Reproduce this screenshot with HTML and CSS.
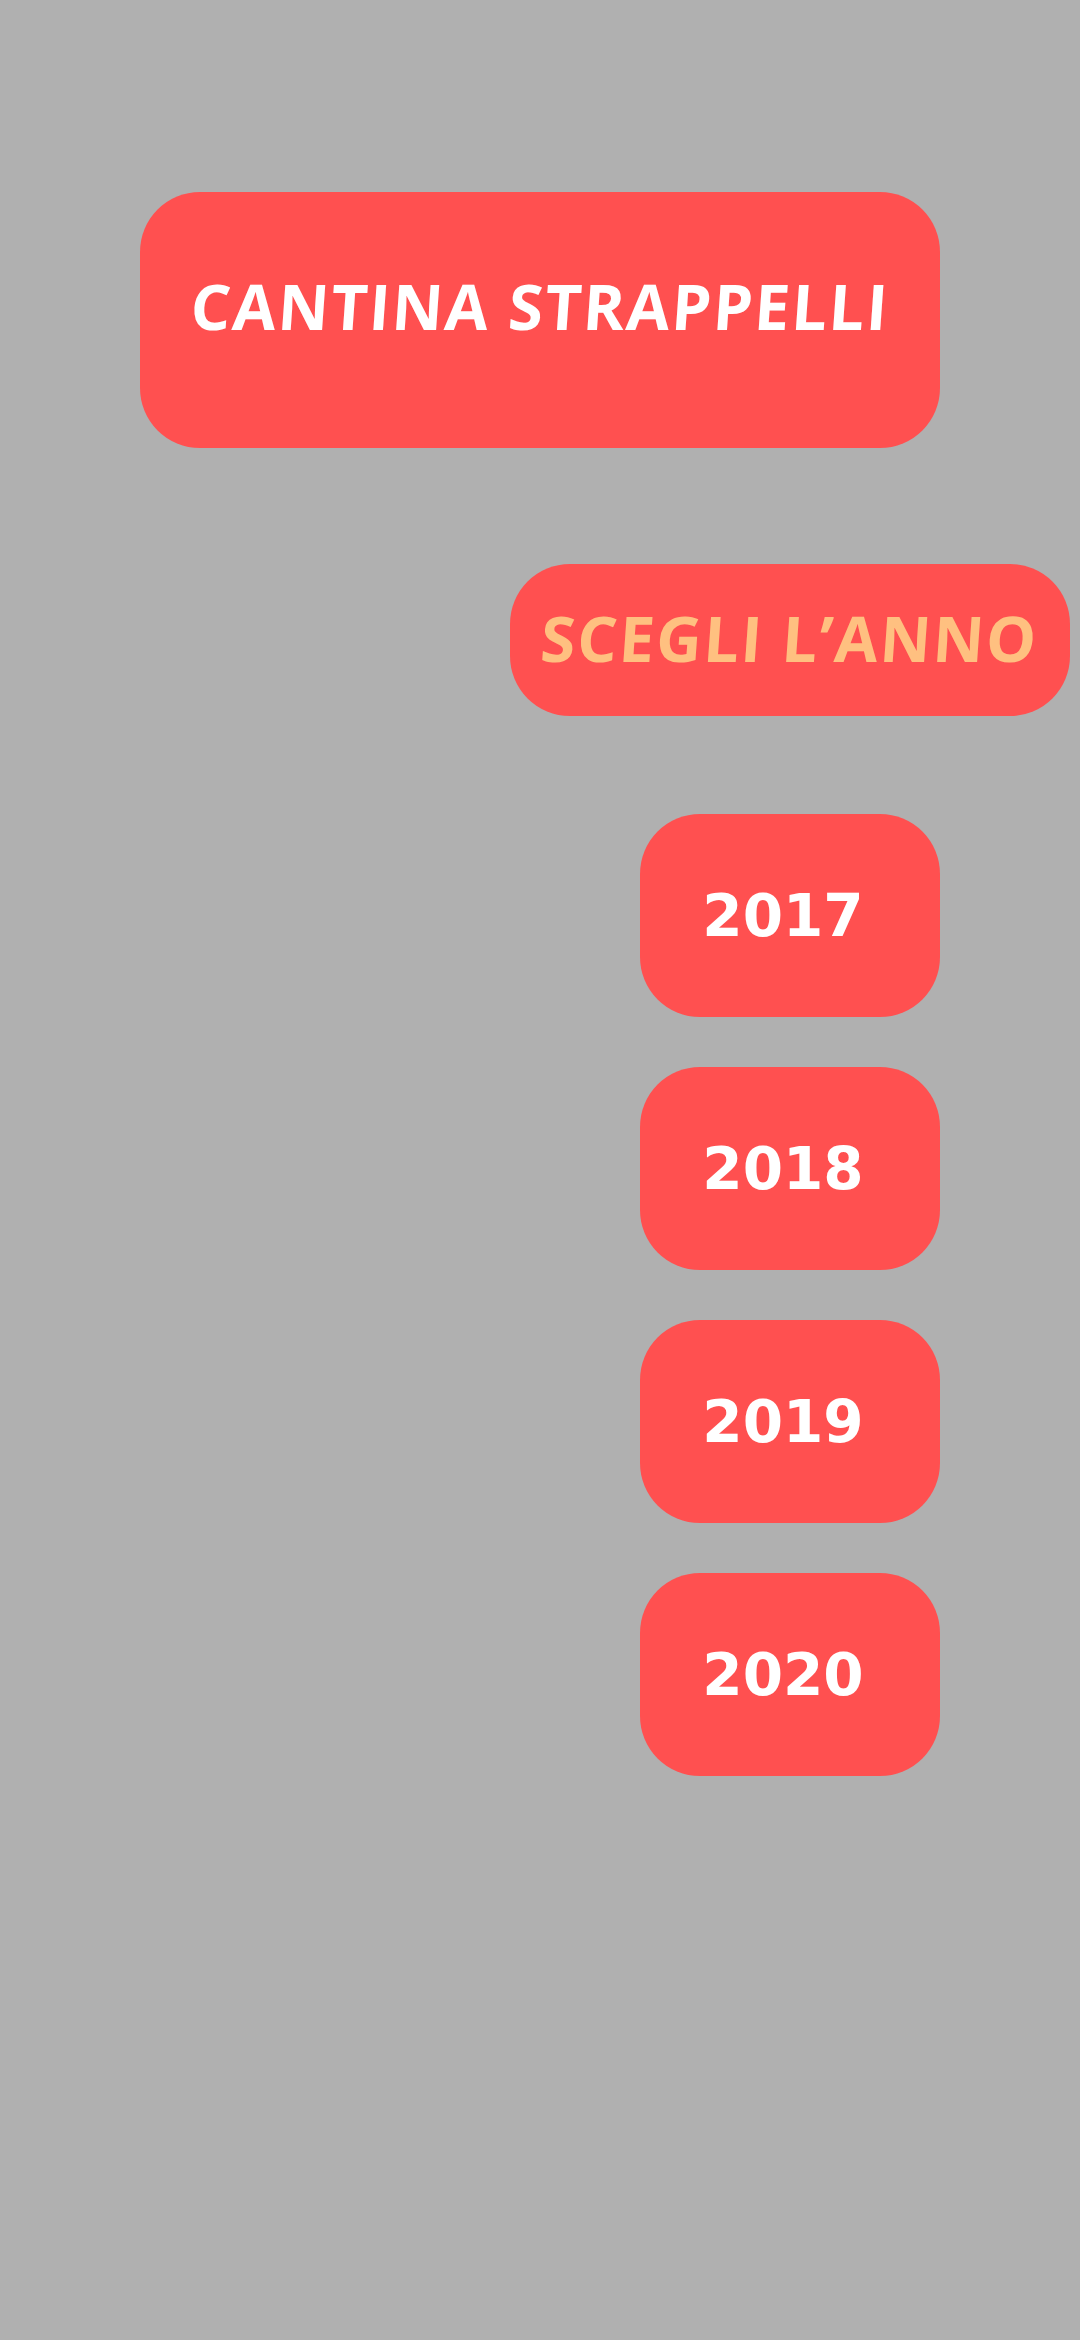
FILE: index.html
```html
<!DOCTYPE html>
<html lang="it">
<head>
<meta charset="utf-8">
<title>Cantina Strappelli</title>
<link rel="stylesheet" href="styles.css">
</head>
<body>
<main class="screen">
  <div class="title-box"><span class="title">CANTINA STRAPPELLI</span></div>
  <div class="choose-box"><span class="choose">SCEGLI L’ANNO</span></div>
  <div class="years">
    <a class="year">2017</a>
    <a class="year">2018</a>
    <a class="year">2019</a>
    <a class="year">2020</a>
  </div>
</main>
</body>
</html>
```
FILE: styles.css
```css
html, body {
  margin: 0;
  padding: 0;
  background: #b0b0b0;
}
.screen {
  width: 1080px;
  height: 2340px;
  display: flex;
  flex-direction: column;
  align-items: flex-start;
}
.title-box {
  margin-top: 192px;
  margin-left: 140px;
  width: 800px;
  height: 256px;
  background: #ff5050;
  border-radius: 60px;
  display: flex;
  justify-content: center;
  align-items: center;
  padding-bottom: 30px;
  box-sizing: border-box;
}
.title {
  font-family: "Open Sans", "DejaVu Sans", sans-serif;
  font-weight: 700;
  font-size: 63px;
  color: #ffffff;
  letter-spacing: 1.8px;
  white-space: nowrap;
  display: inline-block;
  transform: skewX(-4deg);
}
.choose-box {
  margin-top: 116px;
  margin-left: 510px;
  width: 560px;
  height: 152px;
  background: #ff5050;
  border-radius: 60px;
  display: flex;
  justify-content: center;
  align-items: center;
  padding-bottom: 6px;
  box-sizing: border-box;
}
.choose {
  font-family: "Open Sans", "DejaVu Sans", sans-serif;
  font-weight: 700;
  font-size: 63px;
  color: #ffc080;
  letter-spacing: 1.8px;
  white-space: nowrap;
  display: inline-block;
  transform: skewX(-4deg);
}
.years {
  margin-top: 98px;
  margin-left: 640px;
  display: flex;
  flex-direction: column;
  gap: 50px;
}
.year {
  width: 300px;
  height: 203px;
  background: #ff5050;
  border-radius: 60px;
  display: flex;
  justify-content: center;
  align-items: center;
  padding-right: 14px;
  padding-bottom: 0;
  box-sizing: border-box;
  font-family: "DejaVu Sans", sans-serif;
  font-weight: bold;
  font-size: 58px;
  color: #ffffff;
}
```
